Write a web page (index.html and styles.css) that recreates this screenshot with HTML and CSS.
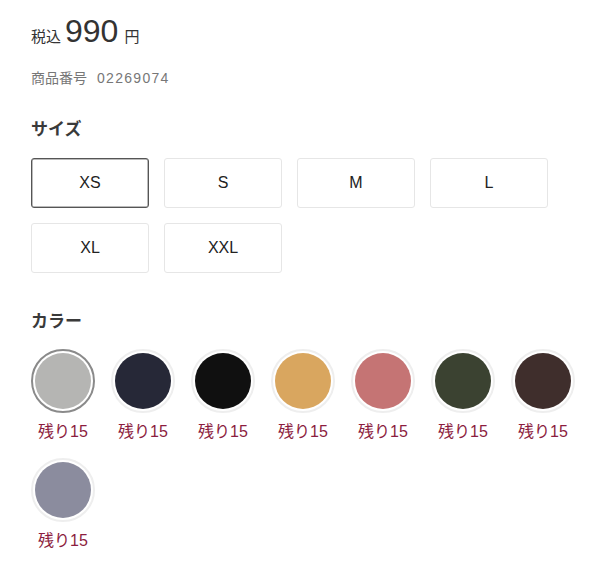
FILE: index.html
```html
<!DOCTYPE html>
<html lang="ja">
<head>
<meta charset="utf-8">
<link rel="stylesheet" href="styles.css">
</head>
<body>
<div class="product">
  <div class="price"><span class="tax">税込</span><span class="amount">990</span><span class="yen">円</span></div>
  <div class="code"><span class="code-label">商品番号</span><span class="code-num">02269074</span></div>

  <h2 class="heading heading-size">サイズ</h2>
  <div class="sizes">
    <button class="size is-selected">XS</button>
    <button class="size">S</button>
    <button class="size">M</button>
    <button class="size">L</button>
    <button class="size">XL</button>
    <button class="size">XXL</button>
  </div>

  <h2 class="heading heading-color">カラー</h2>
  <div class="colors">
    <div class="color is-selected"><div class="ring"><div class="dot" style="background:#b5b5b3"></div></div><div class="stock">残り15</div></div>
    <div class="color"><div class="ring"><div class="dot" style="background:#262837"></div></div><div class="stock">残り15</div></div>
    <div class="color"><div class="ring"><div class="dot" style="background:#101010"></div></div><div class="stock">残り15</div></div>
    <div class="color"><div class="ring"><div class="dot" style="background:#d9a65f"></div></div><div class="stock">残り15</div></div>
    <div class="color"><div class="ring"><div class="dot" style="background:#c57474"></div></div><div class="stock">残り15</div></div>
    <div class="color"><div class="ring"><div class="dot" style="background:#3b4231"></div></div><div class="stock">残り15</div></div>
    <div class="color"><div class="ring"><div class="dot" style="background:#3f2e2c"></div></div><div class="stock">残り15</div></div>
    <div class="color"><div class="ring"><div class="dot" style="background:#8b8c9e"></div></div><div class="stock">残り15</div></div>
  </div>
</div>
</body>
</html>
```

FILE: styles.css
```css
html, body {
  margin: 0;
  padding: 0;
  background: #fff;
}
body {
  font-family: "Liberation Sans", "Noto Sans CJK JP", sans-serif;
  color: #222;
}
.product {
  padding: 0 31px;
}
.price {
  margin-top: 11px;
  height: 40px;
  line-height: 40px;
  color: #333;
}
.tax, .yen {
  font-size: 15px;
  line-height: 1;
}
.amount {
  font-size: 32px;
  margin: 0 6px 0 4px;
}
.code {
  margin-top: 17px;
  font-size: 14px;
  line-height: 20px;
  color: #777;
}
.code-num {
  margin-left: 10px;
  letter-spacing: 1.3px;
}
.heading {
  margin: 0;
  font-size: 17px;
  line-height: 24px;
  font-weight: 700;
  color: #3a3a3a;
}
.heading-size {
  margin-top: 30px;
}
.heading-color {
  margin-top: 37px;
}
.sizes {
  margin-top: 16px;
  display: grid;
  grid-template-columns: repeat(4, 118px);
  grid-auto-rows: 50px;
  gap: 15px;
}
.size {
  box-sizing: border-box;
  margin: 0;
  padding: 0;
  background: #fff;
  border: 1px solid #e6e6e6;
  border-radius: 3px;
  font-family: "Liberation Sans", sans-serif;
  font-size: 16px;
  color: #222;
}
.size.is-selected {
  border: 1px solid #555;
  box-shadow: inset 0 0 0 0.5px #777;
}
.colors {
  margin-top: 15px;
  display: grid;
  grid-template-columns: repeat(7, 64px);
  column-gap: 16px;
  row-gap: 16px;
}
.color {
  display: flex;
  flex-direction: column;
  align-items: center;
}
.ring {
  box-sizing: border-box;
  width: 64px;
  height: 64px;
  border-radius: 50%;
  border: 2px solid #eee;
  padding: 2px;
  background: #fff;
}
.color.is-selected .ring {
  border-color: #8a8a8a;
}
.dot {
  width: 100%;
  height: 100%;
  border-radius: 50%;
}
.stock {
  margin-top: 9px;
  font-size: 16px;
  line-height: 20px;
  color: #8c1d40;
  white-space: nowrap;
}
```
